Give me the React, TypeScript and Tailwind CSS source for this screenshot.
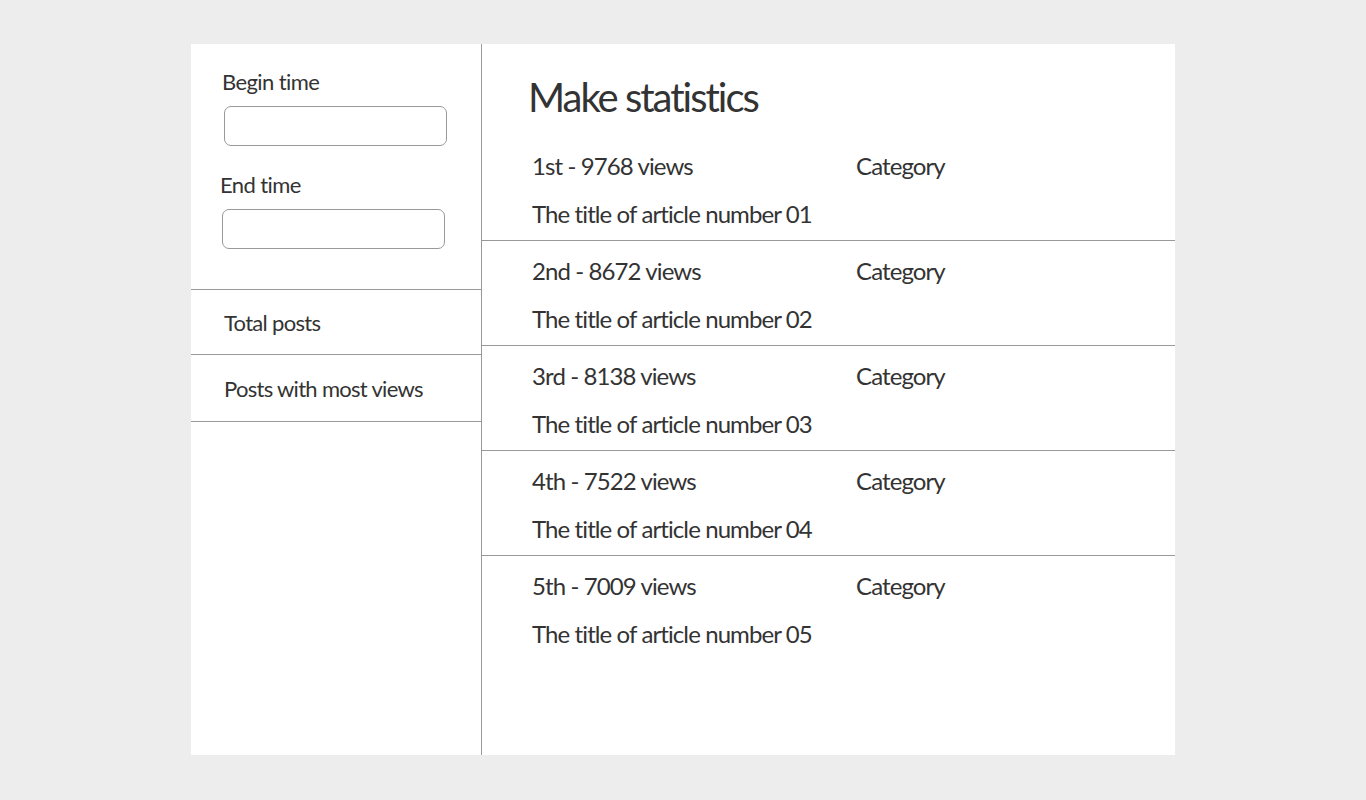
const rows = [
  { rank: "1st - 9768 views", title: "The title of article number 01" },
  { rank: "2nd - 8672 views", title: "The title of article number 02" },
  { rank: "3rd - 8138 views", title: "The title of article number 03" },
  { rank: "4th - 7522 views", title: "The title of article number 04" },
  { rank: "5th - 7009 views", title: "The title of article number 05" },
];

const font = { fontFamily: "Lato, 'Open Sans', sans-serif" };

export default function App() {
  return (
    <div
      className="min-h-[800px] w-full bg-[#ededed] pt-[44px] text-[#333]"
      style={font}
    >
      <div className="ml-[191px] flex h-[711px] w-[984px] bg-white">
        <aside className="w-[291px] shrink-0 border-r border-[#999]">
          <div className="h-[245px] pt-[26px]">
            <label className="block pl-[31px] text-[22px] leading-[24px] tracking-[-0.6px]">
              Begin time
            </label>
            <input className="ml-[33px] mt-[12px] block h-[40px] w-[223px] rounded-[7px] border border-[#999] outline-none" />
            <label className="mt-[27px] block pl-[29px] text-[22px] leading-[24px] tracking-[-0.6px]">
              End time
            </label>
            <input className="ml-[31px] mt-[12px] block h-[40px] w-[223px] rounded-[7px] border border-[#999] outline-none" />
          </div>
          <div className="border-t border-[#999]">
            <div className="flex h-[64px] items-center pl-[33px] text-[22px] tracking-[-0.7px]">
              Total posts
            </div>
            <div className="flex h-[67px] items-center border-t border-[#999] pl-[33px] text-[22px] tracking-[-0.7px]">
              Posts with most views
            </div>
            <div className="border-t border-[#999]" />
          </div>
        </aside>
        <main className="flex-1">
          <h1 className="pl-[46px] pt-[29px] text-[40px] leading-[48px] tracking-[-2px]">
            Make statistics
          </h1>
          <div className="mt-[15px]">
            {rows.map((r, i) => (
              <div
                key={i}
                className={
                  "h-[105px] pl-[50px] pt-[16px] text-[24px] leading-[28px] tracking-[-0.9px] " +
                  (i < rows.length - 1 ? "border-b border-[#999]" : "")
                }
              >
                <div className="flex">
                  <span className="w-[324px]">{r.rank}</span>
                  <span>Category</span>
                </div>
                <div className="mt-[20px]">{r.title}</div>
              </div>
            ))}
          </div>
        </main>
      </div>
    </div>
  );
}
